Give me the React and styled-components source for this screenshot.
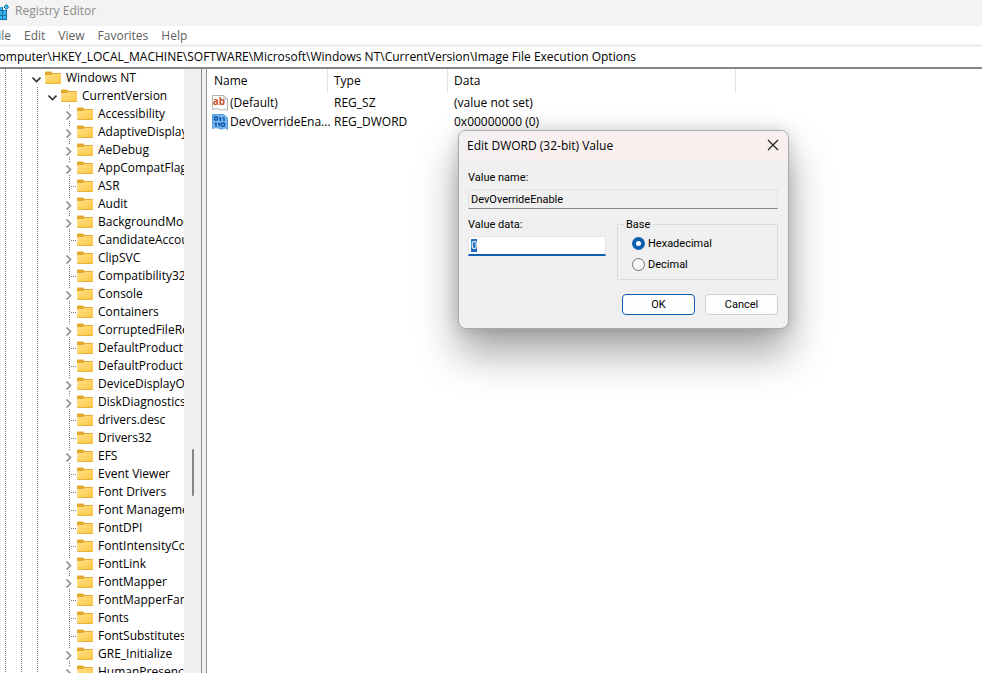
import React from 'react';
import styled, { createGlobalStyle, css } from 'styled-components';

const GlobalStyle = createGlobalStyle`
  *, *::before, *::after {
    box-sizing: border-box;
  }
  body {
    margin: 0;
    font-family: 'Open Sans', 'Noto Sans', sans-serif;
    font-size: 12px;
    line-height: 18px;
    color: #000;
    background: #fff;
  }
  button, input {
    font: inherit;
    color: inherit;
  }
`;

const dots = '#767676';

const Window = styled.div`
  display: flex;
  flex-direction: column;
  height: 100vh;
  overflow: hidden;
`;

const TitleBar = styled.header`
  display: flex;
  align-items: center;
  gap: 6px;
  height: 26px;
  flex: none;
  margin-left: -8px;
  padding-bottom: 4px;
  background: #f3f3f3;
  color: #8c8c8c;
`;

const MenuBar = styled.nav`
  display: flex;
  align-items: center;
  gap: 13px;
  flex: none;
  height: 21px;
  margin-left: -8px;
  padding-top: 2px;
  border-bottom: 3px solid #f0f0f0;
`;

const MenuItem = styled.button`
  padding: 0;
  border: 0;
  background: none;
  color: #5f5f5f;
`;

const AddressBar = styled.input`
  flex: none;
  height: 22px;
  margin-left: -9px;
  padding: 0 0 2px;
  border: 0;
  border-bottom: 2px solid #868686;
  outline: none;
`;

const Panes = styled.main`
  display: flex;
  flex: 1;
  min-height: 0;
`;

const TreePane = styled.div`
  display: flex;
  flex: none;
  width: 202px;
  border-right: 1px solid #8a8d92;
`;

const Tree = styled.ul`
  flex: 1;
  min-width: 0;
  margin: 0 0 0 -3px;
  padding: 0;
  list-style: none;
  overflow: hidden;
`;

const TreeRow = styled.li`
  display: flex;
  align-items: center;
  height: 18px;
  white-space: nowrap;

  svg {
    flex: none;
  }
`;

const verticalDots = css`
  background-image: repeating-linear-gradient(${dots} 0 1px, transparent 1px 2px);
  background-repeat: no-repeat;
  background-size: 1px 100%;
  background-position: 8px 0;
`;

const Guide = styled.span`
  flex: none;
  width: 16px;
  height: 18px;
  ${p => p.$line && verticalDots}
`;

const Leaf = styled(Guide)`
  ${verticalDots}
  display: flex;
  align-items: center;
  padding-left: 10px;

  &::after {
    content: '';
    flex: 1;
    height: 1px;
    background: repeating-linear-gradient(90deg, ${dots} 0 1px, transparent 1px 2px);
  }
`;

const Toggle = styled.button`
  flex: none;
  display: flex;
  align-items: center;
  justify-content: center;
  width: 16px;
  height: 18px;
  padding: 2px 1px 0 0;
  border: 0;
  background: none;
  color: ${p => (p.$open ? '#333' : '#8c8c8c')};
`;

const ClosedToggle = styled(Toggle)`
  background:
    repeating-linear-gradient(${dots} 0 1px, transparent 1px 2px) 8px 0 / 1px 3px no-repeat,
    repeating-linear-gradient(${dots} 0 1px, transparent 1px 2px) 8px 16px / 1px 2px no-repeat;
`;

const Label = styled.span`
  margin-left: 5px;
`;

const ScrollBar = styled.div`
  display: flex;
  flex-direction: column;
  align-items: center;
  flex: none;
  width: 17px;
  background: #f0f0f0;

  &::before {
    content: '';
    flex: 380;
  }
  &::after {
    content: '';
    flex: 177;
  }
`;

const Thumb = styled.div`
  flex: 47;
  width: 2px;
  border-radius: 1px;
  background: #868686;
`;

const ValuePane = styled.section`
  flex: 1;
  min-width: 0;
  margin-left: 4px;
  padding-left: 1px;
  border-left: 1px solid #8a8d92;
  box-shadow: -4px 0 #f0f0f0;
`;

const ValueTable = styled.table`
  table-layout: fixed;
  width: 100%;
  border-collapse: separate;
  border-spacing: 0;

  col.name, col.type {
    width: 120px;
  }
  col.data {
    width: 288px;
  }
  th {
    height: 24px;
    padding: 0 0 0 6px;
    border-right: 1px solid #e2e2e2;
    font-weight: 400;
    text-align: left;
  }
  th:last-child {
    border: 0;
  }
  td {
    height: 19px;
    padding: 0 0 0 6px;
    white-space: nowrap;
  }
`;

const NameCell = styled.div`
  display: flex;
  align-items: center;
  gap: 2px;
  margin-left: -2px;

  svg {
    flex: none;
  }
`;

const Dialog = styled.form`
  position: absolute;
  top: 130px;
  left: 458px;
  width: 331px;
  border: 1px solid #a9a9a9;
  border-radius: 8px;
  background: #f0f0f0;
  overflow: hidden;
  box-shadow: 0 24px 42px rgba(0, 0, 0, 0.36), 0 0 16px rgba(0, 0, 0, 0.16);
`;

const DialogTitle = styled.div`
  display: flex;
  align-items: center;
  justify-content: space-between;
  height: 30px;
  padding: 0 9px 0 8px;
  background: linear-gradient(90deg, #f4f0f4, #f9efee 30%, #f9efee);
`;

const CloseButton = styled.button`
  display: flex;
  padding: 0 0 2px;
  border: 0;
  background: none;
`;

const DialogBody = styled.div`
  padding: 8px 10px 13px 9px;
  font-family: 'Roboto', sans-serif;
  font-size: 11px;
  line-height: 18px;
`;

const Field = styled.div`
  display: flex;
  flex-direction: column;
  gap: 2px;
  width: ${p => p.$width || 'auto'};
`;

const TextBox = styled.input`
  height: 20px;
  width: 100%;
  padding: 0 2px;
  border: 1px solid #e4e4e4;
  border-bottom: 1px solid #868686;
  background: #f0f0f0;
  outline: none;

  ${p => p.$active && css`
    background: #fff;
    border-bottom: 2px solid #0f5fb0;
  `}
  &::selection {
    background: #1a6fc0;
    color: #fff;
  }
`;

const Columns = styled.div`
  display: flex;
  align-items: flex-start;
  justify-content: space-between;
  margin-top: 7px;
`;

const Base = styled.fieldset`
  width: 161px;
  height: 64px;
  margin: 0;
  padding: 0 0 0 14px;
  border: 1px solid #dcdcdc;

  legend {
    height: 17px;
    margin-left: -8px;
    padding: 0 2px;
  }
`;

const RadioLabel = styled.label`
  display: flex;
  align-items: center;
  gap: 3px;
  height: 21px;
`;

const Radio = styled.input`
  appearance: none;
  width: 13px;
  height: 13px;
  margin: 0;
  border: 1px solid #767676;
  border-radius: 50%;
  background: #f6f6f6;

  &:checked {
    border: 4px solid #0f5fb0;
    background: #fff;
  }
`;

const Actions = styled.div`
  display: flex;
  justify-content: flex-end;
  gap: 10px;
  margin-top: 14px;
`;

const Button = styled.button`
  width: 73px;
  height: 21px;
  padding: 0;
  border: 1px solid ${p => (p.$primary ? '#0f5fb0' : '#cfcfcf')};
  border-radius: 4px;
  background: #fdfdfd;
`;

const AppIcon = () => (
  <svg width="17" height="18" viewBox="0 0 17 18">
    <path d="M1 5h14v13H1z" fill="#1272a8" />
    <path d="M1 5h4v3H1zM6 5h4v3H6zM1 9h4v4H1zM6 9h4v4H6zM11 9h3v4h-3zM1 14h4v3H1zM6 14h4v3H6zM11 14h3v3h-3z" fill="#36b5ea" />
    <path d="M11 4h6v4h-6z" fill="#f3f3f3" />
    <path d="M14.500 2.500l2 2.500-2 2.500-2.500-2.500z" fill="#46bdea" stroke="#1272a8" />
  </svg>
);

const FolderIcon = () => (
  <svg width="16" height="14" viewBox="0 0 16 14">
    <defs>
      <linearGradient id="folder" x1="0" y1="0" x2="1" y2="1">
        <stop offset="0" stopColor="#ffe38c" />
        <stop offset="1" stopColor="#fbc540" />
      </linearGradient>
    </defs>
    <path d="M0 1.500Q0 .5 1 .5H6L7.500 2H15Q16 2 16 3V6H0z" fill="#e3a82b" />
    <path d="M0 5Q0 4 1 4H6L7.500 3H15Q16 3 16 4V12Q16 13 15 13H1Q0 13 0 12z" fill="url(#folder)" />
    <path d="M.5 12.500H15.500" stroke="#e9b23a" />
  </svg>
);

const Chevron = ({ open }) => (
  <svg width="9" height="9" viewBox="0 0 9 9" fill="none" stroke="currentColor" strokeWidth="1.600">
    <path d={open ? 'M.5 2.500L4.500 6.500L8.500 2.500' : 'M2.500 .5L6.500 4.500L2.500 8.500'} />
  </svg>
);

const sheet = 'M.5 .5H12L15.500 4V15.500Q13.500 13 11.500 14.500Q9.500 16 7.500 14.500Q4 12.500 .5 14.500z';

const StringIcon = () => (
  <svg width="16" height="16" viewBox="0 0 16 16">
    <path d={sheet} fill="#fff" stroke="#b0b0b0" />
    <path d="M12 .5V4H15.500" fill="none" stroke="#b0b0b0" />
    <text x="7" y="10" textAnchor="middle" fontFamily="Open Sans" fontWeight="700" fontSize="10" fill="#c94f2c">ab</text>
  </svg>
);

const BinaryIcon = () => (
  <svg width="16" height="16" viewBox="0 0 16 16">
    <path d={sheet} fill="#74b5f0" stroke="#5b9edb" />
    <g fill="none" stroke="#0b56a8" strokeWidth="1.500">
      <circle cx="4" cy="4.500" r="1.700" />
      <path d="M7.200 4H8.500V7M10.700 4H12V7M2.500 9.500H4V12.500M6 9.500H7.500V12.500" />
      <circle cx="11" cy="10.800" r="1.700" />
    </g>
  </svg>
);

const CloseIcon = () => (
  <svg width="12" height="12" viewBox="0 0 12 12" stroke="#222" strokeWidth="1.200">
    <path d="M1 1L11 11M11 1L1 11" />
  </svg>
);

const menus = ['File', 'Edit', 'View', 'Favorites', 'Help'];

// [key name, has subkeys]
const keys = [
  ['Accessibility', true],
  ['AdaptiveDisplay', true],
  ['AeDebug', true],
  ['AppCompatFlag', true],
  ['ASR', false],
  ['Audit', true],
  ['BackgroundMod', true],
  ['CandidateAccou', false],
  ['ClipSVC', true],
  ['Compatibility32', false],
  ['Console', true],
  ['Containers', false],
  ['CorruptedFileRe', true],
  ['DefaultProductK', false],
  ['DefaultProductK', false],
  ['DeviceDisplayOb', true],
  ['DiskDiagnostics', true],
  ['drivers.desc', false],
  ['Drivers32', false],
  ['EFS', true],
  ['Event Viewer', false],
  ['Font Drivers', false],
  ['Font Manageme', false],
  ['FontDPI', false],
  ['FontIntensityCo', false],
  ['FontLink', true],
  ['FontMapper', true],
  ['FontMapperFam', false],
  ['Fonts', false],
  ['FontSubstitutes', false],
  ['GRE_Initialize', true],
  ['HumanPresence', true]
];

const KeyRow = ({ name, guides, open, expandable }) => (
  <TreeRow>
    {guides.map((line, i) => <Guide key={i} $line={line} />)}
    {open && <Toggle type="button" aria-label={`Collapse ${name}`} $open><Chevron open /></Toggle>}
    {!open && expandable && <ClosedToggle type="button" aria-label={`Expand ${name}`}><Chevron /></ClosedToggle>}
    {!open && !expandable && <Leaf />}
    <FolderIcon />
    <Label>{name}</Label>
  </TreeRow>
);

const EditDialog = () => {
  const [base, setBase] = React.useState('hex');
  const [value, setValue] = React.useState('0');
  const input = React.useRef(null);

  React.useEffect(() => {
    input.current.focus();
    input.current.select();
  }, []);

  return (
    <Dialog role="dialog" aria-labelledby="dialog-title" onSubmit={e => e.preventDefault()}>
      <DialogTitle>
        <span id="dialog-title">Edit DWORD (32-bit) Value</span>
        <CloseButton type="button" aria-label="Close"><CloseIcon /></CloseButton>
      </DialogTitle>
      <DialogBody>
        <Field>
          <label htmlFor="value-name">Value name:</label>
          <TextBox id="value-name" value="DevOverrideEnable" readOnly />
        </Field>
        <Columns>
          <Field $width="138px">
            <label htmlFor="value-data">Value data:</label>
            <TextBox
              id="value-data"
              ref={input}
              value={value}
              onChange={e => setValue(e.target.value)}
              $active
            />
          </Field>
          <Base>
            <legend>Base</legend>
            <RadioLabel>
              <Radio type="radio" name="base" checked={base === 'hex'} onChange={() => setBase('hex')} />
              Hexadecimal
            </RadioLabel>
            <RadioLabel>
              <Radio type="radio" name="base" checked={base === 'dec'} onChange={() => setBase('dec')} />
              Decimal
            </RadioLabel>
          </Base>
        </Columns>
        <Actions>
          <Button type="submit" $primary>OK</Button>
          <Button type="button">Cancel</Button>
        </Actions>
      </DialogBody>
    </Dialog>
  );
};

const App = () => (
  <>
    <GlobalStyle />
    <Window>
      <TitleBar><AppIcon />Registry Editor</TitleBar>
      <MenuBar>
        {menus.map(menu => <MenuItem key={menu} type="button">{menu}</MenuItem>)}
      </MenuBar>
      <AddressBar
        aria-label="Address"
        defaultValue="Computer\HKEY_LOCAL_MACHINE\SOFTWARE\Microsoft\Windows NT\CurrentVersion\Image File Execution Options"
      />
      <Panes>
        <TreePane>
          <Tree>
            <KeyRow name="Windows NT" guides={[true, true]} open />
            <KeyRow name="CurrentVersion" guides={[true, true, true]} open />
            {keys.map(([name, expandable], i) => (
              <KeyRow key={i} name={name} guides={[true, true, true, false]} expandable={expandable} />
            ))}
          </Tree>
          <ScrollBar><Thumb /></ScrollBar>
        </TreePane>
        <ValuePane>
          <ValueTable>
            <colgroup>
              <col className="name" />
              <col className="type" />
              <col className="data" />
              <col />
            </colgroup>
            <thead>
              <tr><th>Name</th><th>Type</th><th>Data</th><th aria-label="Empty" /></tr>
            </thead>
            <tbody>
              <tr>
                <td><NameCell><StringIcon /><span>(Default)</span></NameCell></td>
                <td>REG_SZ</td>
                <td>(value not set)</td>
              </tr>
              <tr>
                <td><NameCell><BinaryIcon /><span>DevOverrideEna...</span></NameCell></td>
                <td>REG_DWORD</td>
                <td>0x00000000 (0)</td>
              </tr>
            </tbody>
          </ValueTable>
        </ValuePane>
      </Panes>
    </Window>
    <EditDialog />
  </>
);

export default App;
